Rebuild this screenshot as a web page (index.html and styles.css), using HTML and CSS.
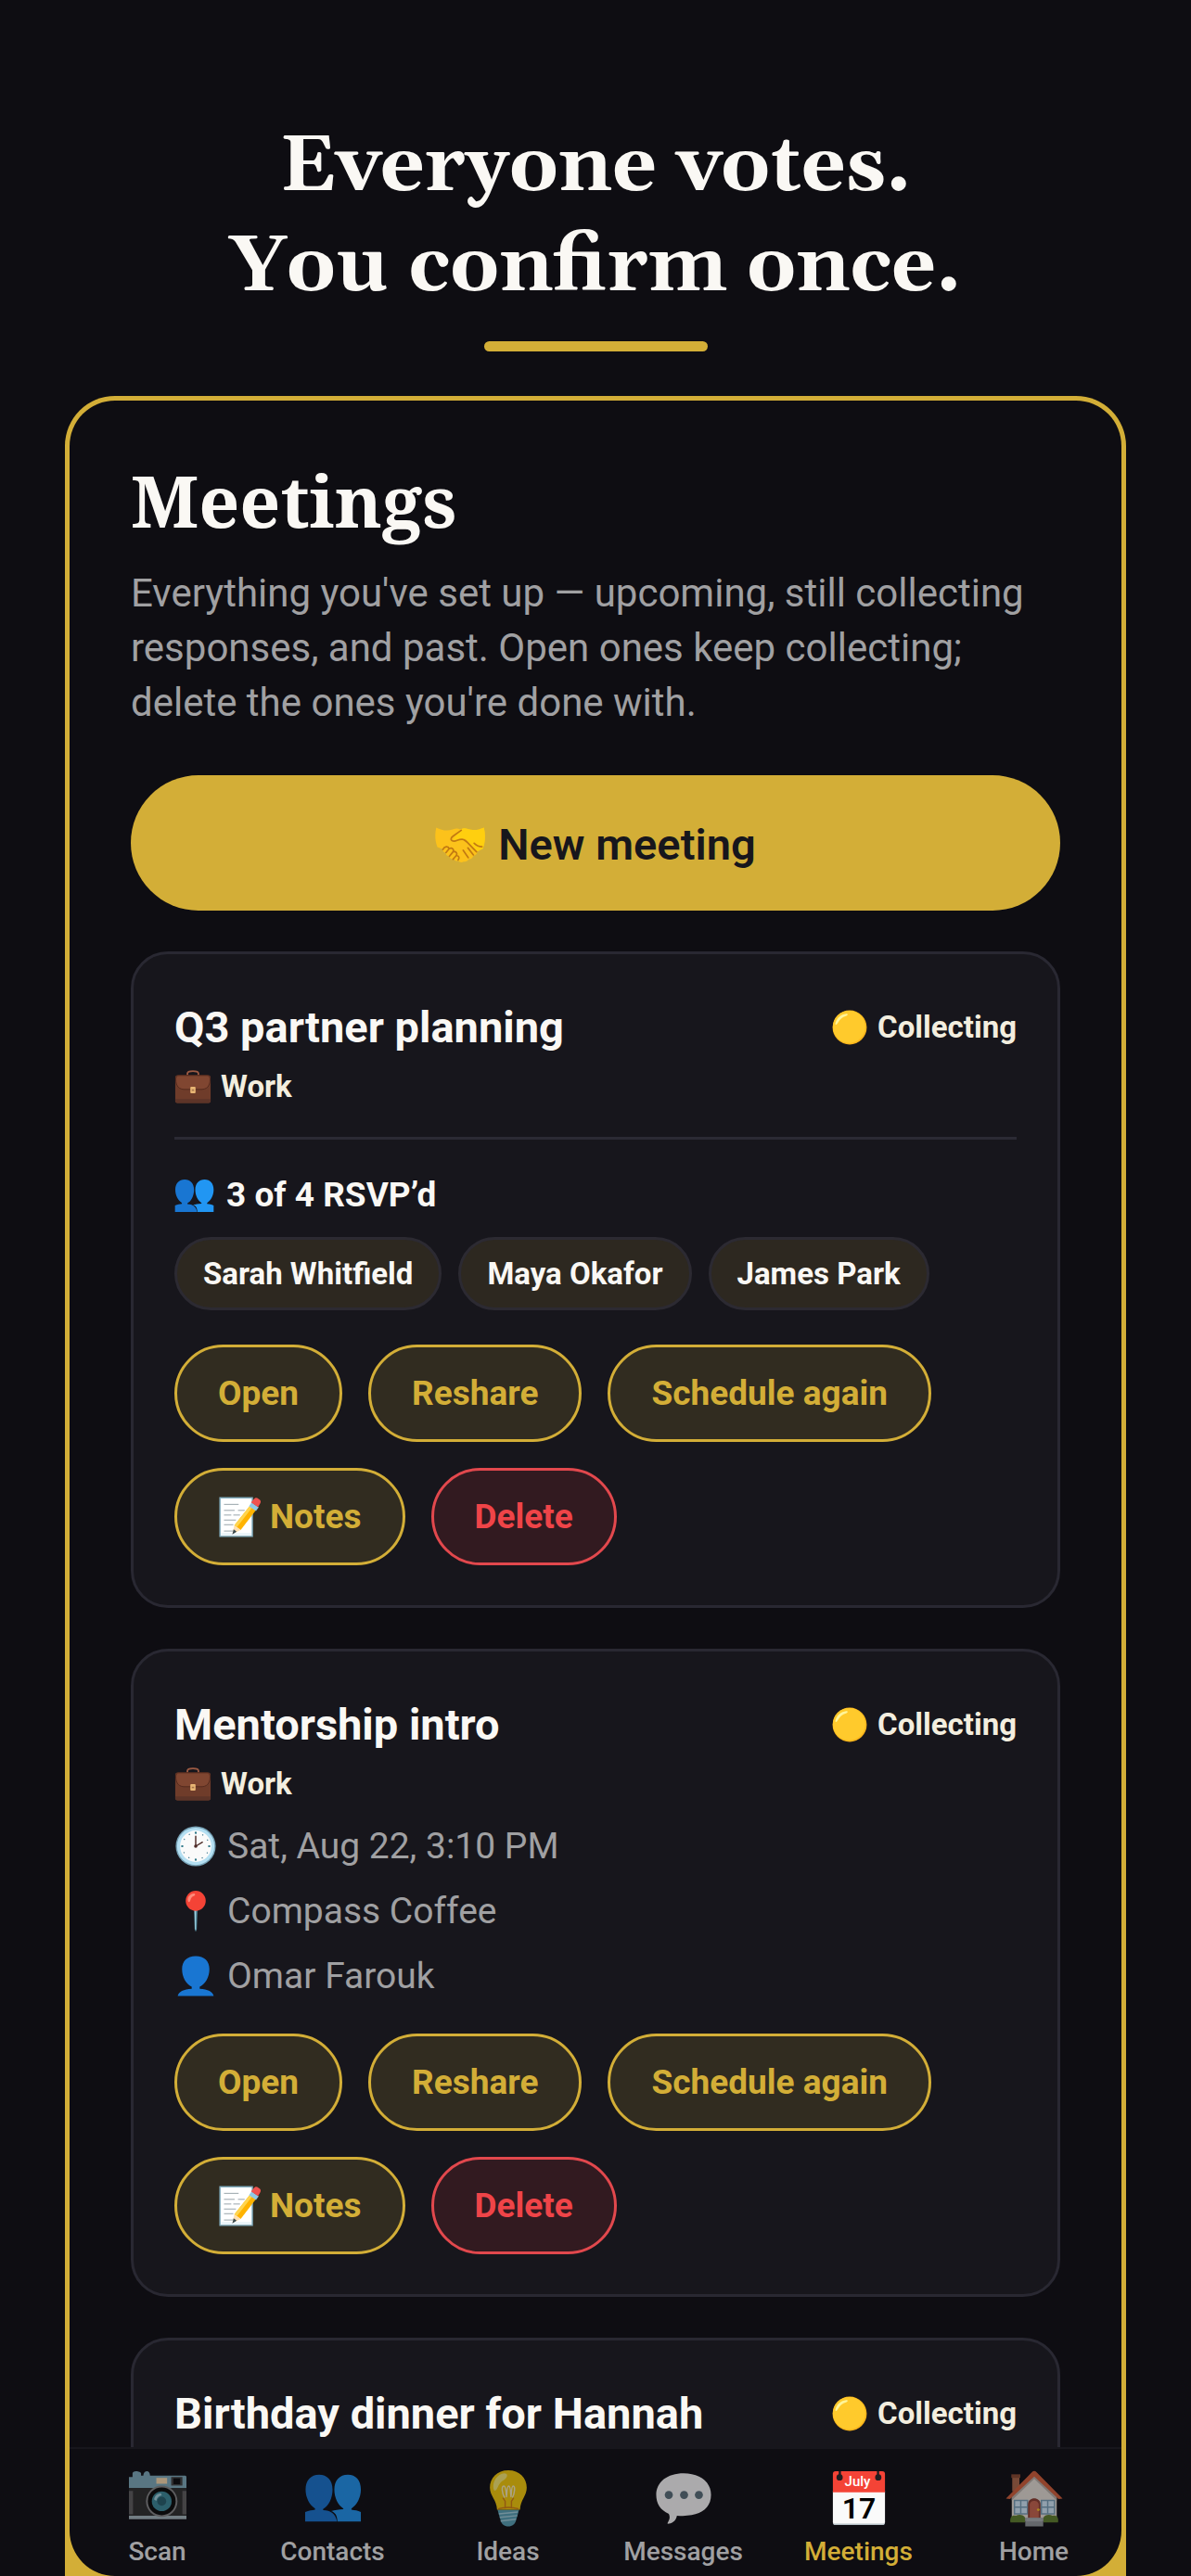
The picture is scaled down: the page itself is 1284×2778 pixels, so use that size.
FILE: index.html
```html
<!DOCTYPE html>
<html lang="en">
<head>
  <meta charset="UTF-8">
  <meta name="viewport" content="width=device-width, initial-scale=1.0">
  <title>Meetings</title>
  <link rel="stylesheet" href="styles.css">
</head>
<body>

  <!-- Icon sprite -->
  <svg class="sprite" aria-hidden="true">
    <symbol id="i-handshake" viewBox="0 0 128 128">
      <path fill="#fcc21b" d="M3 20c14 7 28 10 42 5 8-3 14-3 19 0 6-3 13-3 21-1 14 4 27 2 40-4 4 18 4 36-3 54l-14 7c0 6-4 10-10 11-2 6-6 9-12 9-3 5-7 7-13 6-5 3-10 2-14-2-4 2-9 0-11-5-6 2-11-2-11-7-7 0-10-4-9-9-6 0-9-4-8-9L6 70C0 54-1 38 3 20z"/>
      <path fill="#ffcf0f" d="M62 27c8-6 16-6 24-3 14 4 26 2 39-4 4 18 4 36-3 54l-14 7-31-33-15 6c-6 3-13-2-17 1z"/>
      <path fill="none" stroke="#c27a12" stroke-width="4" stroke-linecap="round" stroke-linejoin="round" d="M67 27L46 42c-8 6-6 13 3 13 6 0 10-5 20-5 9 0 12 7 37 32M100 60c6 6 12 9 20 9M84 72l14 18M72 78l13 19M20 76c4-8 14-10 16-2 8-4 13 2 10 8 8-2 12 4 8 10 7-1 9 5 5 11M36 74l-8 10M46 82l-9 11M54 92l-8 9"/>
    </symbol>
    <symbol id="i-circle" viewBox="0 0 128 128">
      <circle cx="64" cy="64" r="59" fill="#fcb61c"/>
      <circle cx="62" cy="62" r="56" fill="#ffca2c"/>
      <path fill="#fff59a" d="M15 49c5-18 19-30 37-32 8 0 6 6-1 8-12 4-20 10-27 22-5 9-11 10-9 2z"/>
    </symbol>
    <symbol id="i-briefcase" viewBox="0 0 128 128">
      <path fill="none" stroke="#9c5a43" stroke-width="6" d="M45 24v-6c0-5 5-8 19-8s19 3 19 8v6"/>
      <rect x="3" y="24" width="122" height="96" rx="8" fill="#6f3c2a"/>
      <path fill="#5d3428" d="M3 106h122v7c0 5-3 7-7 7H10c-4 0-7-2-7-7z"/>
      <path fill="#804631" stroke="#52291d" stroke-width="3" d="M5 38c0-9 4-13 10-13h98c6 0 10 4 10 13 0 26-13 35-30 35H35C18 73 5 64 5 38z"/>
      <rect x="55" y="64" width="18" height="22" rx="3" fill="#e9b674"/>
      <path fill="#a57349" d="M60 73h8v5h-8z"/>
    </symbol>
    <symbol id="i-people" viewBox="0 0 128 128">
      <path fill="#1976d2" d="M33 12c18 0 30 12 30 33 0 19-9 38-21 43v3c17 1 27 7 31 25H2V95c9-3 15-4 22-5v-3C12 80 3 63 3 45c0-21 12-33 30-33z"/>
      <path fill="#2196f3" d="M97 12c18 0 29 12 29 33 0 18-9 35-21 42v3c8 1 14 2 21 5v21H74c-1-14-5-20-14-23 8-2 16-3 27-4v-2C75 80 67 63 67 45c0-21 12-33 30-33z"/>
    </symbol>
    <symbol id="i-person" viewBox="0 0 128 128">
      <path fill="#1976d2" d="M64 4c26 0 41 15 41 39 0 25-12 44-29 53v6c24 2 40 8 42 22H10c2-14 18-20 42-22v-6c-17-9-29-28-29-53C23 19 38 4 64 4z"/>
    </symbol>
    <symbol id="i-memo" viewBox="0 0 128 128">
      <path fill="#fff" stroke="#82aec0" stroke-width="4" d="M6 6h97v116H6z"/>
      <path fill="#e9f3f8" d="M9 112h91v7H9z"/>
      <path fill="none" stroke="#8d9ba2" stroke-width="2.500" d="M18 26h44M18 44h32M60 44h20M18 58h22M46 58h20M18 73h36M18 87h28M18 106h30"/>
      <path fill="#ffb300" d="M96 30l18 13-46 60-19-14z"/>
      <path fill="#ffd54f" d="M96 30l7 5-47 60-7-6z"/>
      <path fill="#ffe0b2" d="M49 89l19 14-25 12z"/>
      <path fill="#37474f" d="M47 101l9 7-13 8z"/>
      <path fill="#90cae6" d="M101 20l21 15-8 11-21-15z"/>
      <path fill="#ef5350" d="M107 11c4-5 9-6 14-2l4 3c4 3 4 8 1 12l-6 10-21-14z"/>
    </symbol>
    <symbol id="i-clock" viewBox="0 0 128 128">
      <circle cx="64" cy="64" r="60" fill="#78a3b7"/>
      <circle cx="64" cy="64" r="56" fill="#b4dff2"/>
      <circle cx="64" cy="64" r="47" fill="#fafafa"/>
      <circle cx="64" cy="64" r="40" fill="none" stroke="#4d8295" stroke-width="4" stroke-linecap="round" stroke-dasharray=".1 20.840"/>
      <path fill="none" stroke="#2f7889" stroke-width="6" stroke-linecap="round" d="M64 23v1M64 104v1M23 64h1M104 64h1"/>
      <path fill="none" stroke="#4e2c28" stroke-width="4" stroke-linecap="round" d="M64 64V34M64 64l20-12"/>
      <circle cx="64" cy="64" r="5" fill="#4e2c28"/>
    </symbol>
    <symbol id="i-pin" viewBox="0 0 128 128">
      <path fill="#5f98aa" d="M59 58h10l-2 60-3 8-3-8z"/>
      <path fill="#a3d0df" d="M61 60h3v60l-2-4z"/>
      <circle cx="64" cy="33" r="30" fill="#f44336"/>
      <path fill="#ff8a7a" d="M41 34c-3-12 6-22 17-23 6 0 5 6 0 8-5 2-8 5-10 12-2 6-5 8-7 3z"/>
    </symbol>
    <symbol id="i-camera" viewBox="0 0 128 128">
      <path fill="#82aec0" d="M8 17V9c0-3 3-5 8-5s11 2 11 5v5h5c0-7 4-10 8-10s7 4 7 10h78c3 0 3 3 3 4v24H0V17z"/>
      <path fill="#2f2f2f" d="M0 42h128v63H0z"/>
      <path fill="#616161" d="M0 48h9v52H0zM119 48h9v52h-9z"/>
      <path fill="#a8b9c0" d="M0 103h128v8H0z"/>
      <rect x="61" y="19" width="24" height="13" fill="#ffe0b2"/>
      <rect x="94" y="17" width="25" height="19" fill="#424242"/>
      <rect x="99" y="20" width="15" height="13" fill="#0c0c0e"/>
      <circle cx="73" cy="71" r="35" fill="#8a8a8a"/>
      <circle cx="73" cy="71" r="31" fill="#0a0a0a"/>
      <circle cx="73" cy="71" r="22" fill="#3c8b9b"/>
      <circle cx="73" cy="71" r="10" fill="#28606e"/>
      <path fill="#a7d7e3" d="M56 67c1-8 7-13 15-14l2 5c-7 2-10 5-12 12z"/>
    </symbol>
    <symbol id="i-bulb" viewBox="0 0 128 128">
      <path fill="#5aa4b8" d="M40 90h48l-4 14-3 10c-2 8-8 13-17 13s-15-5-17-13l-3-10z"/>
      <path fill="none" stroke="#a5d3e0" stroke-width="3" d="M43 99l42-4M45 107l39-4M47 115l34-4"/>
      <path fill="#fdd00a" d="M64 2c25 0 41 17 41 39 0 18-14 27-15 49H39C38 68 23 59 23 41 23 19 39 2 64 2z"/>
      <path fill="#fff176" d="M31 43c-3-16 9-33 24-34 9 0 8 9 0 14-9 5-11 9-15 18-3 7-7 9-9 2z"/>
      <path fill="none" stroke="#d88412" stroke-width="3" d="M41 88c14-4 32-4 46 0M57 87V71l-5-8M71 87V71l5-8"/>
      <path fill="none" stroke="#fff3c2" stroke-width="3" d="M56 63c-6-9-8-26-2-26s5 24 6 24 0-24 5-24 4 24 5 24 0-24 5-24 3 17-2 26"/>
    </symbol>
    <symbol id="i-bubble" viewBox="0 0 128 128">
      <path fill="#fff" d="M64 9c36 0 61 19 61 48 0 33-29 50-76 46-1 8-7 16-18 18-4 1-3-2-1-5 3-5 4-11 1-17C12 91 3 76 3 57 3 28 28 9 64 9z"/>
      <g fill="#5d727d"><circle cx="31" cy="57" r="9"/><circle cx="65" cy="57" r="9"/><circle cx="98" cy="57" r="9"/></g>
    </symbol>
    <symbol id="i-house" viewBox="0 0 128 128">
      <path fill="#b0694b" d="M15 14h16v35H15z"/>
      <path fill="#8c4b32" d="M13 11h20v8H13z"/>
      <path fill="#ece5dc" d="M14 62l50-49 50 49v53H14z"/>
      <path fill="#bdb4ac" d="M14 69l50-48 50 48v-9L64 12 14 60z"/>
      <path fill="#d8613b" d="M1 65L59 6c3-3 7-3 10 0l58 59-9 1-54-50L10 66z"/>
      <path fill="#d8efff" d="M20 69h29v30H20zM80 69h29v30H80z"/>
      <path fill="none" stroke="#7da4bb" stroke-width="3" d="M20 69h29v30H20zM34 69v30M20 84h29M80 69h29v30H80zM94 69v30M80 84h29"/>
      <path fill="#8f3f31" d="M50 110V78c0-18 28-18 28 0v32z"/>
      <path fill="#cc6650" d="M54 108V79c0-12 20-12 20 0v29z"/>
      <circle cx="73" cy="90" r="3" fill="#ffca28"/>
      <path fill="#62822f" d="M11 118c-2-12 4-17 12-15 8-4 18-2 21 5v10zM117 118c2-12-4-17-12-15-8-4-18-2-21 5v10z"/>
      <path fill="#94999d" d="M44 108h40v19H44z"/>
      <path fill="#b0b5b8" d="M46 108h36v8H46z"/>
    </symbol>
  </svg>

  <header class="hero">
    <h1 class="hero-title">Everyone votes.<br>You confirm once.</h1>
    <div class="hero-bar"></div>
  </header>

  <div class="frame">
    <div class="screen">

      <main class="content">
        <h2 class="page-title">Meetings</h2>
        <p class="intro">Everything you've set up — upcoming, still collecting responses, and past. Open ones keep collecting; delete the ones you're done with.</p>

        <button class="new-meeting" type="button">
          <svg class="icon"><use href="#i-handshake"/></svg>
          New meeting
        </button>

        <article class="card">
          <div class="card-head">
            <h3 class="card-title">Q3 partner planning</h3>
            <span class="tag"><svg class="icon"><use href="#i-circle"/></svg>Collecting</span>
          </div>
          <div class="tag"><svg class="icon"><use href="#i-briefcase"/></svg>Work</div>
          <hr class="divider">
          <div class="rsvp"><svg class="icon"><use href="#i-people"/></svg>3 of 4 RSVP’d</div>
          <ul class="chips">
            <li class="chip">Sarah Whitfield</li>
            <li class="chip">Maya Okafor</li>
            <li class="chip">James Park</li>
          </ul>
          <div class="actions">
            <button class="btn" type="button">Open</button>
            <button class="btn" type="button">Reshare</button>
            <button class="btn" type="button">Schedule again</button>
            <button class="btn" type="button"><svg class="icon"><use href="#i-memo"/></svg>Notes</button>
            <button class="btn btn-danger" type="button">Delete</button>
          </div>
        </article>

        <article class="card">
          <div class="card-head">
            <h3 class="card-title">Mentorship intro</h3>
            <span class="tag"><svg class="icon"><use href="#i-circle"/></svg>Collecting</span>
          </div>
          <div class="tag"><svg class="icon"><use href="#i-briefcase"/></svg>Work</div>
          <ul class="details">
            <li class="detail"><svg class="icon"><use href="#i-clock"/></svg>Sat, Aug 22, 3:10 PM</li>
            <li class="detail"><svg class="icon"><use href="#i-pin"/></svg>Compass Coffee</li>
            <li class="detail"><svg class="icon"><use href="#i-person"/></svg>Omar Farouk</li>
          </ul>
          <div class="actions">
            <button class="btn" type="button">Open</button>
            <button class="btn" type="button">Reshare</button>
            <button class="btn" type="button">Schedule again</button>
            <button class="btn" type="button"><svg class="icon"><use href="#i-memo"/></svg>Notes</button>
            <button class="btn btn-danger" type="button">Delete</button>
          </div>
        </article>

        <article class="card">
          <div class="card-head">
            <h3 class="card-title">Birthday dinner for Hannah</h3>
            <span class="tag"><svg class="icon"><use href="#i-circle"/></svg>Collecting</span>
          </div>
        </article>
      </main>

      <nav class="tabs">
        <a class="tab" href="#scan"><svg class="icon"><use href="#i-camera"/></svg>Scan</a>
        <a class="tab" href="#contacts"><svg class="icon"><use href="#i-people"/></svg>Contacts</a>
        <a class="tab" href="#ideas"><svg class="icon"><use href="#i-bulb"/></svg>Ideas</a>
        <a class="tab" href="#messages"><svg class="icon"><use href="#i-bubble"/></svg>Messages</a>
        <a class="tab active" href="#meetings">
          <svg class="icon" viewBox="0 0 128 128">
            <path fill="#fafafa" d="M6 48h116v69c0 4-2 6-6 6H12c-4 0-6-2-6-6z"/>
            <path fill="#b7c1c7" d="M6 116c0 3 2 5 6 5h104c4 0 6-2 6-5v2c0 4-2 6-6 6H12c-4 0-6-2-6-6z"/>
            <path fill="#f44336" d="M12 4h104c4 0 6 2 6 6v41H6V10c0-4 2-6 6-6z"/>
            <g fill="#201d20"><circle cx="21" cy="18" r="7"/><circle cx="107" cy="18" r="7"/><path d="M19 4h5v14h-5zM104 4h5v14h-5z"/></g>
            <text class="cal-month" x="61" y="38">July</text>
            <text class="cal-day" x="64" y="110">17</text>
          </svg>
          Meetings
        </a>
        <a class="tab" href="#home"><svg class="icon"><use href="#i-house"/></svg>Home</a>
      </nav>

    </div>
  </div>

</body>
</html>
```
FILE: styles.css
```css
* {
  box-sizing: border-box;
}
body {
  display: flex;
  flex-direction: column;
  height: 100vh;
  margin: 0;
  overflow: hidden;
  background-color: #0e0d12;
  color: #faf8f4;
  font-family: Roboto, sans-serif;
}
h1, h2, h3, p, ul {
  margin: 0;
  padding: 0;
}
ul {
  list-style: none;
}
button {
  font-family: inherit;
  cursor: pointer;
}
.sprite {
  position: absolute;
  width: 0;
  height: 0;
}
.icon {
  flex: none;
  width: 40px;
  height: 40px;
}

/* Headline */
.hero {
  padding: 127px 40px 48px;
  text-align: center;
}
.hero-title {
  font-family: Georgia, Gelasio, "Liberation Serif", serif;
  font-size: 84px;
  font-weight: 700;
  line-height: 108px;
}
.hero-bar {
  width: 241px;
  height: 11px;
  margin: 25px auto 0;
  border-radius: 6px;
  background-color: #d3ae37;
}

/* Device frame */
.frame {
  flex: 1;
  display: flex;
  min-height: 0;
  margin: 0 70px;
  padding: 5px 5px 0;
  border-radius: 54px 54px 0 0;
  background-color: #d3ae37;
}
.screen {
  flex: 1;
  display: flex;
  flex-direction: column;
  min-width: 0;
  overflow: hidden;
  border-radius: 49px;
  background-color: #0e0d12;
}
.content {
  flex: 1;
  min-height: 0;
  padding: 58px 66px 0;
  overflow: hidden;
}
.page-title {
  font-family: "Noto Serif", "DejaVu Serif Condensed", "DejaVu Serif", serif;
  font-size: 77px;
  font-weight: 700;
  line-height: 100px;
}
.intro {
  margin-top: 20px;
  color: #a0a0a2;
  font-size: 42px;
  line-height: 59px;
}
.new-meeting {
  display: flex;
  align-items: center;
  justify-content: center;
  gap: 14px;
  width: 100%;
  margin-top: 49px;
  padding: 46px 44px 42px;
  border: none;
  border-radius: 73px;
  background-color: #d3ae37;
  color: #17161c;
  font-size: 47px;
  font-weight: 600;
  line-height: 58px;
}
.new-meeting .icon {
  width: 54px;
  height: 54px;
}

/* Meeting cards */
.card {
  margin-top: 44px;
  padding: 44px 44px 43px;
  border: 3px solid #292832;
  border-radius: 40px;
  background-color: #17161c;
}
.card-head {
  display: flex;
  align-items: center;
  justify-content: space-between;
  margin-bottom: 4px;
}
.card-title {
  font-size: 47px;
  font-weight: 700;
  line-height: 70px;
}
.tag {
  display: flex;
  align-items: center;
  gap: 10px;
  color: #f3eedf;
  font-size: 33px;
  font-weight: 700;
  line-height: 50px;
}
.divider {
  height: 3px;
  margin: 29px 0 34px;
  border: none;
  background-color: #2b2a34;
}
.rsvp {
  display: flex;
  align-items: center;
  gap: 13px;
  font-size: 37px;
  font-weight: 700;
  line-height: 52px;
}
.rsvp .icon {
  width: 43px;
  height: 43px;
}
.detail .icon,
.btn .icon {
  width: 46px;
  height: 46px;
}
.chips {
  display: flex;
  flex-wrap: wrap;
  gap: 18px;
  margin-top: 19px;
}
.chip {
  padding: 15px 28px;
  border: 3px solid #2c2a32;
  border-radius: 40px;
  background-color: #2d2820;
  font-size: 33px;
  font-weight: 700;
  line-height: 43px;
}
.details {
  display: grid;
  gap: 20px;
  margin-top: 17px;
}
.detail {
  display: flex;
  align-items: center;
  gap: 11px;
  color: #a0a0a2;
  font-size: 39px;
  line-height: 50px;
}
.actions {
  display: flex;
  flex-wrap: wrap;
  gap: 28px;
  margin-top: 37px;
}
.btn {
  display: flex;
  align-items: center;
  gap: 10px;
  padding: 28px 44px;
  border: 3px solid #d3ae37;
  border-radius: 53px;
  background-color: #312c20;
  color: #d3ae37;
  font-size: 37px;
  font-weight: 700;
  line-height: 43px;
}
.btn .icon {
  margin: -2px 0;
}
.btn-danger {
  border-color: #e2484d;
  background-color: #321a20;
  color: #ef4448;
}

/* Bottom tabs */
.tabs {
  display: grid;
  grid-template-columns: repeat(6, 1fr);
  padding: 22px 0 9px;
  border-top: 2px solid #17161c;
}
.tab {
  display: flex;
  flex-direction: column;
  align-items: center;
  gap: 10px;
  color: #a0a0a2;
  font-size: 28px;
  font-weight: 500;
  line-height: 34px;
  text-decoration: none;
}
.tab .icon {
  width: 62px;
  height: 62px;
  opacity: 0.65;
}
.tab.active {
  color: #d3ae37;
}
.tab.active .icon {
  opacity: 1;
}
.cal-month,
.cal-day {
  font-family: Roboto, sans-serif;
  text-anchor: middle;
}
.cal-month {
  fill: #fff;
  font-size: 31px;
  font-weight: 500;
}
.cal-day {
  fill: #000;
  font-size: 66px;
  font-weight: 600;
}
```
